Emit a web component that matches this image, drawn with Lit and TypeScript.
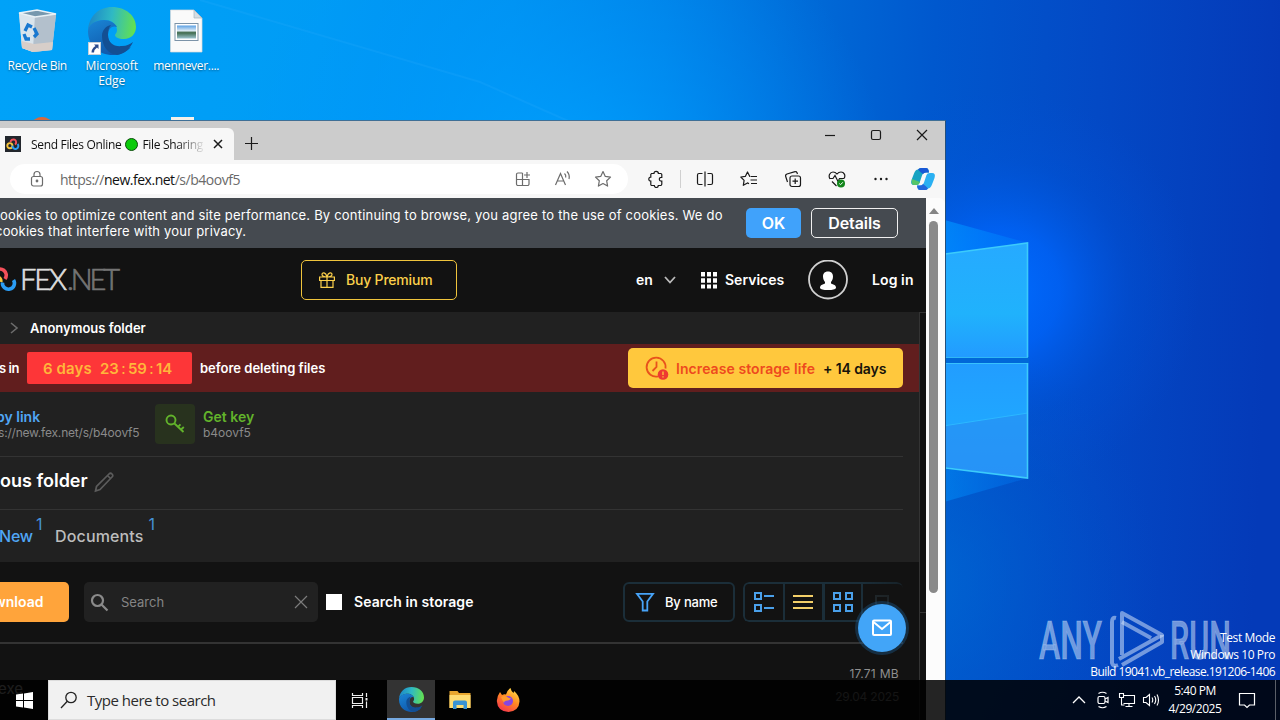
import { LitElement, html, css, svg } from "lit";
import { customElement } from "lit/decorators.js";

const edgeLogo = html`
  <svg viewBox="0 0 48 48" width="100%" height="100%">
    <defs>
      <linearGradient id="sweep" x1="0" y1="0.2" x2="1" y2="0.3">
        <stop offset="0" stop-color="#1b84c8" />
        <stop offset="0.5" stop-color="#2fb9c4" />
        <stop offset="1" stop-color="#62e052" />
      </linearGradient>
      <linearGradient id="body" x1="0" y1="0" x2="0.6" y2="1">
        <stop offset="0" stop-color="#1a86d6" />
        <stop offset="1" stop-color="#0f55a8" />
      </linearGradient>
    </defs>
    <path fill="url(#sweep)" d="M0 23C1 9 11 0 24 0c14 0 24 9 24 20 0 7-5 12-12 12-6 0-9-2-9-4 0-1 2-2 2-5 0-5-5-10-12-10C8 13 1 18 0 23z" />
    <path fill="url(#body)" d="M0 24c0-6 7-11 16-11 6 0 11 3 13 7-4-2-9 1-9 8 0 8 7 14 15 14 4 0 6-1 8-2-4 5-11 8-18 8C10 48 0 38 0 24z" />
    <path fill="#134f93" d="M14 29c0-6 4-10 9-11-2 2-3 5-3 10 0 8 6 12 14 11 5 0 8-2 11-4-3 7-9 12-16 13-9-1-15-9-15-19z" />
  </svg>
`;

const fexMark = svg`
  <g fill="none" stroke-width="3.400">
    <circle cx="8.500" cy="17" r="4.500" stroke="#f5c33b" />
    <path d="M9.500 11a5 5 0 1 1 8 4" stroke="#f4505a" />
    <path d="M13 17a5.200 5.200 0 1 0 9-3" stroke="#2b9df4" />
  </g>
`;

@customElement("desk-wallpaper")
export class DeskWallpaper extends LitElement {
  static styles = css`
    :host,
    svg {
      display: block;
    }

    .mark {
      font-family: "Roboto", sans-serif;
      font-size: 53px;
      font-weight: 500;
      stroke: #cfe0f8;
      stroke-opacity: 0.3;
      stroke-width: 1px;
    }
  `;

  render() {
    return html`
      <svg width="1280" height="720" viewBox="0 0 1280 720">
        <defs>
          <linearGradient id="sky" x1="0" y1="0" x2="1280" y2="60" gradientUnits="userSpaceOnUse">
            <stop offset="0" stop-color="#00a2f8" />
            <stop offset="0.25" stop-color="#009cf5" />
            <stop offset="0.4" stop-color="#0092ee" />
            <stop offset="0.52" stop-color="#0080e4" />
            <stop offset="0.62" stop-color="#006cd8" />
            <stop offset="0.73" stop-color="#0058ce" />
            <stop offset="0.86" stop-color="#0349c5" />
            <stop offset="1" stop-color="#043ab8" />
          </linearGradient>
          <radialGradient id="haze" cx="560" cy="200" r="330" gradientUnits="userSpaceOnUse">
            <stop offset="0" stop-color="#00a4ff" stop-opacity="0.9" />
            <stop offset="1" stop-color="#0090ff" stop-opacity="0" />
          </radialGradient>
          <radialGradient id="glow" cx="1000" cy="290" r="200" gradientUnits="userSpaceOnUse">
            <stop offset="0" stop-color="#006cff" />
            <stop offset="0.3" stop-color="#0064fa" stop-opacity="0.8" />
            <stop offset="0.65" stop-color="#0056e0" stop-opacity="0.3" />
            <stop offset="1" stop-color="#0050d8" stop-opacity="0" />
          </radialGradient>
          <radialGradient id="floor" cx="900" cy="580" r="260" gradientUnits="userSpaceOnUse">
            <stop offset="0" stop-color="#006ad4" stop-opacity="0.9" />
            <stop offset="1" stop-color="#0050c8" stop-opacity="0" />
          </radialGradient>
          <linearGradient id="wedge" x1="930" y1="0" x2="1028" y2="0" gradientUnits="userSpaceOnUse">
            <stop offset="0" stop-color="#0098ff" stop-opacity="0.75" />
            <stop offset="1" stop-color="#0080ff" stop-opacity="0.35" />
          </linearGradient>
          <linearGradient id="pane" x1="0" y1="243" x2="0" y2="478" gradientUnits="userSpaceOnUse">
            <stop offset="0" stop-color="#26aaff" />
            <stop offset="0.3" stop-color="#20b2fc" />
            <stop offset="0.48" stop-color="#229cff" />
            <stop offset="0.75" stop-color="#20a6ff" />
            <stop offset="1" stop-color="#249eff" />
          </linearGradient>
        </defs>
        <rect width="1280" height="720" fill="url(#sky)" />
        <rect width="1280" height="720" fill="url(#haze)" />
        <rect width="1280" height="720" fill="url(#glow)" />
        <rect width="1280" height="720" fill="url(#floor)" />
        <path d="M200 0L480 82L575 124" fill="none" stroke="#3ab4ff" stroke-width="2" opacity="0.15" />
        <path d="M930 216L1028 243V357H930z" fill="url(#wedge)" />
        <path d="M930 506L1028 478V363H930z" fill="url(#wedge)" opacity="0.7" />
        <rect x="930" y="356" width="99" height="8" fill="#0068d8" />
        <g fill="url(#pane)">
          <path d="M930 256L1028 243V357H930z" />
          <path d="M930 363H1028V478L930 465z" />
        </g>
        <path d="M930 428L1028 413V478L930 465z" fill="#2a88f0" opacity="0.5" />
        <path d="M930 428L1028 413" stroke="#2cb8ff" />
        <g fill="none" stroke="#3ccbfb" stroke-width="1.600">
          <path d="M930 256L1027.500 243V357" />
          <path d="M930 466L1027.500 478V363" />
          <path d="M930 357.500H1028M930 363.500H1028" stroke-width="0.800" />
        </g>
        <g fill="#cfe0f8" fill-opacity="0.55">
          <text class="mark" x="1039" y="659" textLength="63" lengthAdjust="spacingAndGlyphs">ANY</text>
          <text class="mark" x="1170" y="659" textLength="61" lengthAdjust="spacingAndGlyphs">RUN</text>
        </g>
        <g fill="none" stroke="#cfe0f8" stroke-opacity="0.55" stroke-width="4" stroke-linejoin="round">
          <path d="M1122 655V613L1162 635L1119 659" />
          <path d="M1116 618Q1112 617 1112 622V663Q1113 667 1118 665" />
          <path d="M1122 665L1162 642V635M1122 622L1151 638" />
        </g>
      </svg>
    `;
  }
}

@customElement("desk-icons")
export class DeskIcons extends LitElement {
  static styles = css`
    :host {
      display: block;
      font-family: "Open Sans", "Noto Sans", sans-serif;
    }

    .row {
      display: flex;
      padding-top: 7px;
    }

    .item {
      display: flex;
      flex-direction: column;
      align-items: center;
      width: 74.5px;
      color: #fff;
      font-size: 12px;
      line-height: 15px;
      letter-spacing: -0.3px;
      text-align: center;
      text-shadow: 0 1px 2px rgba(0, 0, 0, 0.45);
    }

    .icon {
      display: flex;
      align-items: flex-end;
      width: 48px;
      height: 48px;
      margin-bottom: 3px;
    }

    .shortcut {
      flex-shrink: 0;
      width: 13px;
      height: 13px;
      margin: 0 -13px 0 0;
      z-index: 1;
    }

    .peek {
      display: flex;
      padding: 29px 0 0 32px;
      gap: 119px;
    }

    .fox {
      width: 20px;
      height: 16px;
      border-radius: 50% 50% 0 0;
      background: #d8693c;
    }

    .sheet {
      width: 23px;
      height: 16px;
      background: #f4f1ea;
    }

    .wide {
      letter-spacing: -0.05px;
    }
  `;

  render() {
    return html`
      <div class="row">
        <div class="item">
          <svg class="icon" viewBox="0 0 48 48">
            <path d="M6 6L24 3 43 7 39 43 20 45 9 41z" fill="#c2d2de" />
            <path d="M6 6L22 9 20 45 9 41z" fill="#d9e4ec" />
            <path d="M22 9L43 7 39 43 20 45z" fill="#b3c0cc" />
            <path d="M6 6L24 3 43 7 22 10z" fill="#7798ae" stroke="#e9f1f6" stroke-width="1.500" />
            <path d="M8.500 34L9 41 20 45 39 43 40 35 21 37z" fill="#d7cec9" />
            <g fill="none" stroke="#1878d0" stroke-width="3.300">
              <path d="M12 24l3-6 4 2" />
              <path d="M21 21l3 6-3 3" />
              <path d="M17 32h-4l-2-5" />
            </g>
          </svg>
          <span>Recycle Bin</span>
        </div>
        <div class="item">
          <div class="icon">
            <svg class="shortcut" viewBox="0 0 13 13">
              <rect x="0.500" y="0.500" width="12" height="12" fill="#fff" stroke="#c8d0d8" />
              <path d="M6 2.500h4.500V7L9 5.500Q6 7.500 6 10.500H3.500Q3.500 6.500 7.500 4z" fill="#2b4a8c" />
            </svg>
            ${edgeLogo}
          </div>
          <span class="wide">Microsoft<br />Edge</span>
        </div>
        <div class="item">
          <svg class="icon" viewBox="0 0 48 48">
            <defs>
              <linearGradient id="photo" x1="0" y1="0" x2="0" y2="1">
                <stop offset="0" stop-color="#5aa0e4" />
                <stop offset="0.400" stop-color="#dbe9f4" />
                <stop offset="0.550" stop-color="#3f6a4c" />
                <stop offset="1" stop-color="#9cc3cf" />
              </linearGradient>
            </defs>
            <path d="M8.500 3H32L40 11V45H8.500z" fill="#fafafa" stroke="#d8d8d8" stroke-width="0.700" />
            <path d="M32 3V11H40z" fill="#d5dde3" stroke="#a8b4bd" stroke-width="0.700" />
            <rect x="13" y="16.500" width="23" height="17" fill="#fff" stroke="#7c93a8" />
            <rect x="15" y="18.500" width="19" height="13" fill="url(#photo)" />
          </svg>
          <span>mennever....</span>
        </div>
      </div>
      <div class="peek">
        <div class="fox"></div>
        <div class="sheet"></div>
      </div>
    `;
  }
}

@customElement("edge-chrome")
export class EdgeChrome extends LitElement {
  static styles = css`
    :host {
      display: block;
      font-family: "Open Sans", "Noto Sans", sans-serif;
      color: #111;
    }

    .titlebar {
      display: flex;
      height: 39px;
      background: #cccccc;
    }

    .tab {
      display: flex;
      align-items: center;
      box-sizing: border-box;
      width: 234px;
      margin-top: 7px;
      padding-left: 5px;
      border-radius: 0 6px 0 0;
      background: #f7f7f7;
      font-size: 12px;
    }

    .favicon {
      width: 16px;
      height: 16px;
      margin-right: 10px;
    }

    .caption {
      display: flex;
      align-items: center;
      width: 174px;
      overflow: hidden;
      white-space: nowrap;
      letter-spacing: -0.32px;
      -webkit-mask-image: linear-gradient(to right, #000 145px, transparent 175px);
    }

    .caption span {
      flex-shrink: 0;
    }

    .dot {
      box-sizing: border-box;
      width: 13px;
      height: 13px;
      margin: 0 4px 0 4px;
      border: 1px solid #0a4a0a;
      border-radius: 50%;
      background: #0acb0a;
    }

    .close {
      margin-left: 7px;
    }

    .plus {
      margin: 15px 0 0 10px;
    }

    .controls {
      display: flex;
      margin-left: auto;
      height: 29px;
    }

    .controls svg {
      width: 46px;
      height: 29px;
    }

    svg {
      display: block;
      flex-shrink: 0;
      fill: none;
      stroke: #1a1a1a;
      stroke-width: 1.2;
    }

    .toolbar {
      display: flex;
      align-items: center;
      height: 38px;
      background: #f7f7f7;
    }

    .address {
      display: flex;
      align-items: center;
      box-sizing: border-box;
      width: 618px;
      height: 30px;
      margin-left: 10px;
      padding-left: 17px;
      border-radius: 15px;
      background: #fff;
    }

    .address svg {
      stroke: #6c6c6c;
    }

    .url {
      width: 443px;
      margin-left: 13px;
      font-size: 14px;
      letter-spacing: -0.48px;
      color: #6a6a6a;
      white-space: nowrap;
    }

    .url b {
      font-weight: 400;
      color: #111;
    }

    .tool {
      display: flex;
      justify-content: center;
      width: 44px;
    }

    .address .tool {
      width: 40px;
    }

    .puzzle {
      margin-left: 6px;
    }

    .divider {
      width: 1px;
      height: 18px;
      margin: 0 2px 0 2px;
      background: #d0d0d0;
    }

    .pilot {
      width: 40px;
    }
  `;

  render() {
    return html`
      <div class="titlebar">
        <div class="tab">
          <svg class="favicon" viewBox="0 0 28 28">
            <rect width="28" height="28" fill="#22262c" stroke="none" />
            ${fexMark}
          </svg>
          <div class="caption">
            <span>Send Files Online</span>
            <span class="dot"></span>
            <span>File Sharing</span>
          </div>
          <svg class="close" width="12" height="12" viewBox="0 0 12 12"><path d="M2 2l8 8M10 2l-8 8" stroke-width="1.500" /></svg>
        </div>
        <svg class="plus" width="15" height="15" viewBox="0 0 15 15"><path d="M7.500 1v13M1 7.500h13" /></svg>
        <div class="controls">
          <svg viewBox="0 0 46 29"><path d="M18 14.500h10" /></svg>
          <svg viewBox="0 0 46 29"><rect x="18.500" y="9.500" width="9" height="9" rx="1.500" /></svg>
          <svg viewBox="0 0 46 29"><path d="M18 9l10 10M28 9l-10 10" /></svg>
        </div>
      </div>
      <div class="toolbar">
        <div class="address">
          <svg width="20" height="20" viewBox="0 0 20 20">
            <rect x="4.500" y="7.500" width="11" height="9.500" rx="2" />
            <path d="M7 7.500V5.500a3 3 0 0 1 6 0v2" />
            <circle cx="10" cy="12" r="0.800" fill="#6c6c6c" />
          </svg>
          <div class="url">https://<b>new.fex.net</b>/s/b4oovf5</div>
          <div class="tool">
            <svg width="18" height="18" viewBox="0 0 18 18">
              <path d="M8.500 3H4a1.500 1.500 0 0 0-1.500 1.500V14A1.500 1.500 0 0 0 4 15.500h9.500A1.500 1.500 0 0 0 15 14V9.500H2.500M8.500 3v12.500M13 2v6M10 5h6" />
            </svg>
          </div>
          <div class="tool">
            <svg width="18" height="18" viewBox="0 0 18 18">
              <path d="M1.500 15L6.500 3.500 11.500 15M3.300 11h6.400M10.500 3.500q1.700 1.500 1.200 4M13 1.500q3 3 2 7.500" />
            </svg>
          </div>
          <div class="tool">
            <svg width="18" height="18" viewBox="0 0 18 18">
              <path d="M9 1.500l2.300 4.900 5.200.7-3.800 3.700.9 5.300L9 13.500l-4.600 2.600.9-5.300L1.500 7.100l5.200-.7z" stroke-linejoin="round" />
            </svg>
          </div>
        </div>
        <div class="tool puzzle">
          <svg width="18" height="18" viewBox="0 0 18 18">
            <path d="M4.500 3.500H7a2.200 2.200 0 0 1 4.400 0h2.400a1 1 0 0 1 1 1v2.800h-.6a1.900 1.900 0 0 0 0 3.800h.6V14a1.500 1.500 0 0 1-1.500 1.500h-2a2 2 0 0 1-4 0H5A1.200 1.200 0 0 1 3.800 14v-2.800a2 2 0 0 1 0-4V4.500z" />
          </svg>
        </div>
        <span class="divider"></span>
        <div class="tool">
          <svg width="18" height="18" viewBox="0 0 18 18">
            <path d="M6.500 3.500H3A1.500 1.500 0 0 0 1.500 5v8A1.500 1.500 0 0 0 3 14.500h3.500M11.500 3.500H15A1.500 1.500 0 0 1 16.500 5v8a1.500 1.500 0 0 1-1.500 1.500h-3.500M9 1.500v15" />
          </svg>
        </div>
        <div class="tool">
          <svg width="18" height="18" viewBox="0 0 18 18">
            <path d="M10.500 6.500H9.800L7.500 2 5.300 6.400.8 7l3.300 3.300-.8 5 4.200-2.400 1.500.8M11 6.500h6M10.500 10h6.500M11 13.500h6" stroke-linejoin="round" />
          </svg>
        </div>
        <div class="tool">
          <svg width="18" height="18" viewBox="0 0 18 18">
            <rect x="6" y="6" width="10.500" height="10.500" rx="2" />
            <path d="M11.200 8.500v5.500M8.500 11.200H14M13.500 4l-.6-1.400A1.500 1.500 0 0 0 11 1.700L3 4a2 2 0 0 0-1.300 2.500L3.500 12" />
          </svg>
        </div>
        <div class="tool">
          <svg width="18" height="18" viewBox="0 0 18 18">
            <path d="M2 9C0 5.500 2 2 5 2c2 0 3.200 1 4 2 .8-1 2-2 4-2 3 0 5 3.500 3 6.500M4 11.500l4.500 4.500M1.500 8.500H5L7 5.500l3 6 1.500-3H16" />
            <circle cx="13" cy="13.500" r="4" fill="#12851b" stroke="none" />
            <path d="M11.300 13.500l1.300 1.200 2.200-2.400" stroke="#fff" stroke-width="1" />
          </svg>
        </div>
        <div class="tool">
          <svg width="18" height="18" viewBox="0 0 18 18">
            <g fill="#1a1a1a" stroke="none"><circle cx="3.500" cy="9" r="1.200" /><circle cx="9" cy="9" r="1.200" /><circle cx="14.500" cy="9" r="1.200" /></g>
          </svg>
        </div>
        <div class="tool pilot">
          <svg width="26" height="24" viewBox="0 0 26 24">
            <g stroke="none">
              <path d="M8 2.500Q9 1 11 1h5q2 0 2.500 2L19 5.500h-3q-3 0-4 3L9.500 16Q9 18 6 18H4Q0 18 1.500 13L4 6.500Q5.500 2.500 8 2.500z" fill="#16a3c2" />
              <path d="M8 2.500Q9 1 11 1h5q2 0 2.500 2L19 5.500h-3q-2 0-3 1.500Q10 5 8 2.500z" fill="#1958d6" />
              <path d="M2 12l8 3-.5 1Q9 18 6 18H4q-3 0-2-6z" fill="#54c569" />
              <path d="M18 21.500Q17 23 15 23h-5q-2 0-2.500-2L7 18.500h3q3 0 4-3L16.500 8q.5-2 3.500-2h2q4 0 2.500 5L22 17.500q-1.500 4-4 4z" fill="#2ab0f2" />
              <path d="M18 21.500Q17 23 15 23h-5q-2 0-2.500-2L7 18.500h3q2 0 3-1.500 3 2 5 4.500z" fill="#2167dc" />
            </g>
          </svg>
        </div>
      </div>
    `;
  }
}

@customElement("fex-page")
export class FexPage extends LitElement {
  static styles = css`
    :host {
      display: block;
      width: 926px;
      height: 522px;
      overflow: hidden;
      font-family: "Inter", sans-serif;
      background: #121212;
      color: #fff;
      white-space: nowrap;
    }

    svg {
      display: block;
      flex-shrink: 0;
      fill: none;
    }

    .cookies {
      display: flex;
      box-sizing: border-box;
      height: 50px;
      padding-top: 10px;
      background: #454a50;
    }

    .notice {
      width: 746px;
      margin-top: -1px;
      font-size: 13px;
      line-height: 16px;
      letter-spacing: 0.2px;
    }

    .notice span {
      margin-left: -5px;
    }

    .btn {
      display: flex;
      align-items: center;
      justify-content: center;
      box-sizing: border-box;
      width: 55px;
      height: 30px;
      border-radius: 5px;
      background: #40a2fb;
      font-size: 16px;
      font-weight: 600;
      letter-spacing: -0.1px;
    }

    .outline {
      width: 87px;
      margin-left: 10px;
      border: 1px solid #f0f0f0;
      background: none;
    }

    .header {
      display: flex;
      align-items: center;
      height: 64px;
    }

    .header span {
      margin-top: -1px;
    }

    .logo {
      width: 301px;
    }

    .brand {
      font-family: "Lato", sans-serif;
      font-size: 29px;
      font-weight: 300;
      stroke-width: 0.7;
    }

    .premium {
      display: flex;
      align-items: center;
      box-sizing: border-box;
      width: 156px;
      height: 40px;
      padding-left: 17px;
      gap: 11px;
      border: 1px solid #f0c43c;
      border-radius: 5px;
      color: #fcd04b;
      font-size: 14px;
      font-weight: 500;
      letter-spacing: -0.2px;
    }

    .lang {
      display: flex;
      align-items: center;
      width: 64px;
      margin-left: 179px;
      gap: 10px;
      font-size: 14px;
      font-weight: 600;
    }

    .services {
      display: flex;
      align-items: center;
      width: 108px;
      gap: 8px;
      font-size: 14px;
      font-weight: 600;
    }

    .login {
      margin-left: 24px;
      font-size: 14px;
      font-weight: 600;
      letter-spacing: 0.1px;
    }

    .body {
      display: grid;
      grid-template-columns: 919px 1fr;
    }

    .side {
      display: flex;
      flex-direction: column;
      border-left: 1px solid #333;
    }

    .side-box {
      box-sizing: border-box;
      height: 300px;
      border-top: 1px solid #333;
    }

    .crumbs {
      display: flex;
      align-items: center;
      height: 32px;
      padding-left: 9px;
      gap: 11px;
      background: #212121;
      font-size: 13px;
      font-weight: 600;
    }

    .crumbs span {
      margin-top: -1px;
    }

    .expiry {
      display: flex;
      align-items: center;
      height: 48px;
      background: #611e1e;
      font-size: 13px;
      font-weight: 600;
    }

    .clip {
      width: 28px;
      margin-left: -1px;
      letter-spacing: -0.4px;
    }

    .timer {
      display: flex;
      align-items: center;
      box-sizing: border-box;
      width: 165px;
      height: 32px;
      margin-right: 8px;
      padding-left: 16px;
      border-radius: 2px;
      background: #fd3638;
      color: #ffb63b;
      font-size: 15px;
    }

    .timer i {
      width: 9px;
      font-style: normal;
      text-align: center;
      font-weight: 400;
    }

    .timer .days {
      width: 57px;
      letter-spacing: 0.1px;
    }

    .extend {
      display: flex;
      align-items: center;
      box-sizing: border-box;
      width: 275px;
      height: 40px;
      margin: 0 16px 0 auto;
      padding-left: 17px;
      border-radius: 5px;
      background: #ffc83d;
      color: #ee4a1e;
      font-size: 14px;
      letter-spacing: -0.1px;
    }

    .extend .label {
      width: 147px;
      margin-left: 7px;
      letter-spacing: 0.07px;
    }

    .extend .bonus {
      color: #17130a;
    }

    .panel {
      padding-right: 16px;
      background: #212121;
    }

    .share {
      display: flex;
      box-sizing: border-box;
      height: 65px;
      padding-top: 12px;
      border-bottom: 1px solid #333;
    }

    .pair {
      padding-top: 4px;
      font-size: 14px;
      font-weight: 600;
      line-height: 17px;
    }

    .pair small {
      display: block;
      color: #8a8a8a;
      font-size: 12px;
      font-weight: 400;
      line-height: 15px;
    }

    .link {
      width: 155px;
      color: #50a6f5;
    }

    .link div {
      margin-left: -4px;
    }

    .link small {
      margin-left: -2px;
      letter-spacing: -0.2px;
    }

    .key {
      display: flex;
      align-items: center;
      justify-content: center;
      width: 40px;
      height: 40px;
      margin-right: 8px;
      border-radius: 4px;
      background: #28321e;
    }

    .green {
      color: #62b32b;
    }

    .name {
      display: flex;
      align-items: center;
      box-sizing: border-box;
      height: 53px;
      gap: 6px;
      padding-bottom: 4px;
      border-bottom: 1px solid #333;
      font-size: 18px;
      font-weight: 600;
    }

    .name span {
      margin-top: -2px;
    }

    .name svg {
      margin-top: 2px;
    }

    .filters {
      display: flex;
      box-sizing: border-box;
      height: 52px;
      padding-top: 16px;
      color: #bdbdbd;
      font-size: 16px;
      font-weight: 500;
      line-height: 20px;
      letter-spacing: 0.15px;
    }

    .filters sup {
      width: 8px;
      margin: -12px 11px 0 5px;
      color: #4591d6;
      font-size: 16px;
      font-weight: 400;
      vertical-align: baseline;
    }

    .filters .on {
      width: 32px;
      margin-left: -1px;
      color: #50a6f5;
      letter-spacing: -0.2px;
    }

    .actions {
      display: flex;
      align-items: center;
      box-sizing: border-box;
      height: 82px;
      margin-right: 16px;
      border-bottom: 2px solid #333;
    }

    .download {
      box-sizing: border-box;
      width: 69px;
      height: 40px;
      border-radius: 0 5px 5px 0;
      background: #ffa43b;
      font-size: 14px;
      font-weight: 600;
      line-height: 40px;
    }

    .download span {
      margin-left: -6px;
    }

    .search {
      display: flex;
      align-items: center;
      box-sizing: border-box;
      width: 234px;
      height: 40px;
      margin: 0 8px 0 15px;
      padding: 0 8px 0 6px;
      border-radius: 5px;
      background: #212121;
      color: #858585;
      font-size: 13px;
    }

    .search span {
      flex: 1;
      margin-left: 12px;
    }

    .check {
      width: 16px;
      height: 16px;
      margin-right: 12px;
      background: #fff;
    }

    .storage {
      width: 269px;
      margin-top: -2px;
      font-size: 14px;
      font-weight: 600;
      letter-spacing: 0.07px;
    }

    .sort {
      display: flex;
      align-items: center;
      box-sizing: border-box;
      width: 112px;
      height: 40px;
      margin-right: 8px;
      padding-left: 10px;
      gap: 10px;
      border: 2px solid #1b2e39;
      border-radius: 6px;
      font-size: 13px;
      font-weight: 500;
      letter-spacing: -0.2px;
    }

    .views {
      display: flex;
      box-sizing: border-box;
      width: 160px;
      height: 40px;
      border: 2px solid #1b2e39;
      border-right: 0;
      border-radius: 6px;
      -webkit-mask-image: linear-gradient(to right, #000 120px, rgba(0, 0, 0, 0.6) 158px);
    }

    .view {
      display: flex;
      align-items: center;
      justify-content: center;
      box-sizing: border-box;
      flex-shrink: 0;
      width: 40px;
      border-right: 2px solid #1b2e39;
    }

    .view.thick {
      padding-right: 1px;
      border-right-width: 3px;
    }

    .view.tiles {
      width: 38px;
    }

    .view:last-child {
      border-right: 0;
      width: 38px;
      opacity: 0.3;
    }

    .file {
      display: flex;
      flex-direction: column;
      align-items: flex-end;
      padding: 22px 20px 0 0;
      color: #8f8f8f;
      font-size: 12px;
      line-height: 16px;
    }

    .size {
      letter-spacing: 0.3px;
    }

    .date {
      margin-top: 7px;
      letter-spacing: -0.2px;
    }

    .ext {
      align-self: flex-start;
      margin: -24px 0 0 -2px;
      color: #ccc;
      font-size: 15px;
    }
  `;

  render() {
    return html`
      <div class="cookies">
        <div class="notice">
          ookies to optimize content and site performance. By continuing to browse, you agree to the use of cookies. We do<br />
          <span>cookies that interfere with your privacy.</span>
        </div>
        <div class="btn">OK</div>
        <div class="btn outline">Details</div>
      </div>
      <div class="header">
        <svg class="logo" width="301" height="40" viewBox="0 0 301 40">
          <g fill="none" stroke-width="3.600">
            <path d="M-5 11.500A6 6 0 1 1 5 19" stroke="#f4505a" />
            <path d="M-3 17A4 4 0 0 1 1 22" stroke="#f5c33b" stroke-width="3" />
            <path d="M2.500 22.500A6 6 0 1 0 13.500 20" stroke="#2b9df4" />
          </g>
          <text class="brand" x="20" y="30" textLength="47" fill="#dcdcdc" stroke="#dcdcdc">FEX</text>
          <text class="brand" x="67" y="30" textLength="53" fill="#747474" stroke="#747474">.NET</text>
        </svg>
        <div class="premium">
          <svg width="16" height="16" viewBox="0 0 16 16" stroke="#fcd04b" stroke-width="1.200">
            <path d="M.6 5h14.800v3.500H.6zM2 8.500h12v6.900H2zM8 5v10.400M8 5C4 5 3 4 3 2.600 3 .4 6.500-.4 8 5c1.500-5.400 5-4.600 5-2.400C13 4 12 5 8 5z" />
          </svg>
          <span>Buy Premium</span>
        </div>
        <div class="lang">
          <span>en</span>
          <svg width="14" height="10" viewBox="0 0 14 10" stroke="#bbb" stroke-width="1.800"><path d="M2 2l5 5.500L12 2" /></svg>
        </div>
        <div class="services">
          <svg width="17" height="17" viewBox="0 0 17 17">
            <path fill="#fff" d="M1 0h4v4.500H1zM7 0h4v4.500H7zM13 0h4v4.500h-4zM1 6.200h4v4.500H1zM7 6.200h4v4.500H7zM13 6.200h4v4.500h-4zM1 12.400h4v4.200H1zM7 12.400h4v4.200H7zM13 12.400h4v4.200h-4z" />
          </svg>
          <span>Services</span>
        </div>
        <svg width="40" height="40" viewBox="0 0 40 40">
          <circle cx="20" cy="19.500" r="19" stroke="#d0d0d0" stroke-width="1.800" />
          <path fill="#fff" d="M20 11.500c3.500 0 5 2.300 5 5 0 2.500-1 4.500-2 5.500v1.500l3.500 1.500c1 .5 1.500 1.500 1.500 3-1 1.500-3 2-8 2s-7-.5-8-2c0-1.500.5-2.500 1.500-3l3.500-1.500v-1.500c-1-1-2-3-2-5.500 0-2.700 1.500-5 5-5z" />
        </svg>
        <span class="login">Log in</span>
      </div>
      <div class="body">
        <div>
          <div class="crumbs">
            <svg width="10" height="14" viewBox="0 0 10 14" stroke="#6c6c6c" stroke-width="1.600"><path d="M2 2l6 5-6 5" /></svg>
            <span>Anonymous folder</span>
          </div>
          <div class="expiry">
            <span class="clip">s in</span>
            <div class="timer"><span class="days">6 days</span>23<i>:</i>59<i>:</i>14</div>
            <span>before deleting files</span>
            <div class="extend">
              <svg width="24" height="24" viewBox="0 0 24 24" stroke="#e8521c" stroke-width="1.800">
                <path d="M20.500 12.500A9.500 9.500 0 1 0 13 20.400M11.500 5.500V11L7.500 15" />
                <circle cx="18" cy="18.500" r="5.300" fill="#ee3a32" stroke="none" />
                <path d="M18 15.500v3.500M18 20.200v1.300" stroke="#ffc83d" stroke-width="1.300" />
              </svg>
              <span class="label">Increase storage life</span>
              <span class="bonus">+ 14 days</span>
            </div>
          </div>
          <div class="panel">
            <div class="share">
              <div class="pair link"><div>py link</div><small>s://new.fex.net/s/b4oovf5</small></div>
              <div class="key">
                <svg width="20" height="20" viewBox="0 0 20 20" stroke="#62b32b" stroke-width="1.900">
                  <circle cx="6" cy="6" r="4.500" />
                  <path d="M9.200 9.200L18.500 18M13 12.800l2.500-2.500M16 15.500l2.800-2.500" />
                </svg>
              </div>
              <div class="pair green"><div>Get key</div><small>b4oovf5</small></div>
            </div>
            <div class="name">
              <span>ous folder</span>
              <svg width="22" height="22" viewBox="0 0 22 22" stroke="#5c5c5c" stroke-width="1.700">
                <path d="M1.500 20l1-4.500L15 3q1.500-1.500 3 0t0 3L6 18.500zM13.500 4.500l3 3" />
              </svg>
            </div>
            <div class="filters">
              <span class="on">New</span><sup>1</sup>
              <span>Documents</span><sup>1</sup>
            </div>
          </div>
          <div class="actions">
            <div class="download"><span>wnload</span></div>
            <div class="search">
              <svg width="19" height="19" viewBox="0 0 19 19" stroke="#8a8a8a" stroke-width="2.200">
                <circle cx="7.500" cy="7.500" r="5.500" /><path d="M11.500 11.500l6 6" />
              </svg>
              <span>Search</span>
              <svg width="18" height="18" viewBox="0 0 18 18" stroke="#7c7c7c" stroke-width="1.200"><path d="M3 3l12 12M15 3L3 15" /></svg>
            </div>
            <div class="check"></div>
            <div class="storage">Search in storage</div>
            <div class="sort">
              <svg width="20" height="20" viewBox="0 0 20 20" stroke="#47a3f7" stroke-width="1.800"><path d="M2 1.800H18L12.300 9.500V18.500H7.700V9.500z" /></svg>
              By name
            </div>
            <div class="views">
              <div class="view">
                <svg width="22" height="22" viewBox="0 0 22 22" stroke="#4aa0ea" stroke-width="2">
                  <path d="M2 2h6v6H2zM2 14h6v6H2zM11 5h10M11 17h10" />
                </svg>
              </div>
              <div class="view thick">
                <svg width="20" height="20" viewBox="0 0 20 20" stroke="#f3cf68" stroke-width="2"><path d="M0 4h20M0 10h20M0 16h20" /></svg>
              </div>
              <div class="view tiles">
                <svg width="22" height="22" viewBox="0 0 22 22" stroke="#4aa0ea" stroke-width="2">
                  <path d="M2 2h6v6H2zM14 2h6v6H14zM2 14h6v6H2zM14 14h6v6H14z" />
                </svg>
              </div>
              <div class="view">
                <svg width="16" height="16" viewBox="0 0 16 16" stroke="#47606e" stroke-width="2"><path d="M2 2h12v12H2z" /></svg>
              </div>
            </div>
          </div>
          <div class="file">
            <span class="size">17.71 MB</span>
            <span class="date">29.04 2025</span>
            <span class="ext">exe</span>
          </div>
        </div>
        <div class="side">
          <div class="side-box"></div>
          <div class="side-box"></div>
        </div>
      </div>
    `;
  }
}

@customElement("task-bar")
export class TaskBar extends LitElement {
  static styles = css`
    :host {
      display: flex;
      height: 40px;
      background: rgba(0, 0, 0, 0.86);
      color: #fff;
      font-family: "Open Sans", "Noto Sans", sans-serif;
      white-space: nowrap;
    }

    svg {
      display: block;
      fill: none;
    }

    .cell {
      display: flex;
      align-items: center;
      justify-content: center;
      box-sizing: border-box;
      width: 48px;
    }

    .search {
      display: flex;
      align-items: center;
      box-sizing: border-box;
      width: 288px;
      padding-left: 11px;
      gap: 9px;
      border: 1px solid #dcdcdc;
      background: #f1f1f1;
      color: #2b2b2b;
      font-size: 15px;
      letter-spacing: -0.5px;
    }

    .edge {
      margin: 0 1px 0 3px;
      border-bottom: 2px solid #76a9e0;
      background: #333;
    }

    .edge div {
      width: 25px;
      height: 25px;
    }

    .tray {
      display: flex;
      align-items: center;
      margin-left: auto;
    }

    .tray .cell {
      width: 24px;
    }

    .clock {
      width: 64px;
      font-size: 12px;
      line-height: 18px;
      text-align: center;
      letter-spacing: -0.45px;
    }

    .tray .note {
      width: 40px;
    }

    .show {
      width: 4px;
      height: 40px;
      margin-left: 8px;
      border-left: 1px solid #5a5f68;
    }
  `;

  render() {
    return html`
      <div class="cell">
        <svg width="17" height="17" viewBox="0 0 17 17">
          <path fill="#fff" d="M0 2.500L7 1.500V8H0zM8 1.400L17 0V8H8zM0 9H7V15.500L0 14.500zM8 9H17V17L8 15.600z" />
        </svg>
      </div>
      <div class="search">
        <svg width="18" height="18" viewBox="0 0 18 18" stroke="#222" stroke-width="1.300"><circle cx="11" cy="6.500" r="5.200" /><path d="M7.300 10.300L1 17" /></svg>
        Type here to search
      </div>
      <div class="cell">
        <svg width="18" height="17" viewBox="0 0 18 17" stroke="#eee" stroke-width="1.200">
          <path d="M1.500 1v2.500h10V1M1.500 16v-2.500h10V16M1.500 5.500h10v6h-10zM15.500 1v4M15.500 9.500V16" /><path d="M14.500 6h2v2.500h-2z" fill="#eee" stroke="none" />
        </svg>
      </div>
      <div class="cell edge"><div>${edgeLogo}</div></div>
      <div class="cell">
        <svg width="22" height="20" viewBox="0 0 22 20">
          <path d="M.5 1h8l1.500 2H21.500V18H.5z" fill="#e9a72f" />
          <path d="M.5 5H21.500V18H.5z" fill="#ffdc72" />
          <path d="M4 19v-6.500Q4 10.500 6 10.500H16Q18 10.500 18 12.500V19H14.500V15H7.500V19z" fill="#3b93d2" />
        </svg>
      </div>
      <div class="cell">
        <svg width="24" height="24" viewBox="0 0 24 24">
          <defs>
            <linearGradient id="fire" x1="0.800" y1="0" x2="0.200" y2="1">
              <stop offset="0" stop-color="#ffe14a" />
              <stop offset="0.450" stop-color="#ff8a22" />
              <stop offset="1" stop-color="#f5304f" />
            </linearGradient>
          </defs>
          <path fill="url(#fire)" d="M4 4l2 3q2-1 4-.5Q11.500 2 14.500 0q.5 3 3 5 .5-1 .5-2 5.500 4.500 5.500 10.500Q23 23 12.500 24 1.500 23.500.8 13 1 8 4 4z" />
          <circle cx="12" cy="13" r="5" fill="#8646e0" />
          <path fill="#ff9a2c" d="M5 9q4-2 7 .5 1.500 1 3 .5-1 2.500-3.500 2.500Q8 12.500 8 15 6 12 5 9z" />
        </svg>
      </div>
      <div class="tray">
        <div class="cell">
          <svg width="14" height="14" viewBox="0 0 14 14" stroke="#fff" stroke-width="1.300"><path d="M1 10l6-6 6 6" /></svg>
        </div>
        <div class="cell">
          <svg width="14" height="18" viewBox="0 0 14 18" stroke="#fff" stroke-width="1.200">
            <rect x="2" y="5.500" width="7" height="7" rx="1.500" /><path d="M9 8l3-1.500v5L9 10M2.500 2.500Q6.500 0 10.500 2.500M2.500 15.500Q6.500 18 10.500 15.500" />
          </svg>
        </div>
        <div class="cell">
          <svg width="18" height="16" viewBox="0 0 18 16" stroke="#fff" stroke-width="1.100">
            <path d="M5.500 3.500h11v8h-11M11 11.500V14.500M7.500 14.500h7M1.500 1.500h4v4h-4zM3.500 5.500V13h3" />
          </svg>
        </div>
        <div class="cell">
          <svg width="18" height="16" viewBox="0 0 18 16" stroke="#fff" stroke-width="1.100">
            <path d="M1.500 5.500H4L7.500 2.500v11L4 10.500H1.500zM10 5.500q1.500 2.500 0 5M12.500 4q2.500 4 0 8M15 2.500q3 5.500 0 11" />
          </svg>
        </div>
        <div class="clock">5:40 PM<br />4/29/2025</div>
        <div class="cell note">
          <svg width="18" height="18" viewBox="0 0 18 18" stroke="#fff" stroke-width="1.200"><path d="M1.500 2.500h15v11.500h-5L9 16.500 6.500 14h-5z" /></svg>
        </div>
        <div class="show"></div>
      </div>
    `;
  }
}

@customElement("app-root")
export class AppRoot extends LitElement {
  static styles = css`
    :host {
      display: block;
      position: relative;
      width: 1280px;
      height: 720px;
      overflow: hidden;
      background: #0060d8;
    }

    desk-wallpaper,
    desk-icons {
      position: absolute;
      inset: 0;
    }

    .build {
      position: absolute;
      right: 5px;
      top: 629px;
      color: #fff;
      font-family: "Open Sans", "Noto Sans", sans-serif;
      font-size: 12px;
      line-height: 17px;
      letter-spacing: -0.4px;
      text-align: right;
    }

    .build span {
      letter-spacing: -0.56px;
    }

    .window {
      position: absolute;
      left: 0;
      top: 120px;
      box-sizing: border-box;
      width: 946px;
      height: 600px;
      overflow: hidden;
      border-top: 1px solid #3f6f96;
      border-right: 1px solid #24507c;
      background: #f7f7f7;
    }

    .view {
      display: flex;
    }

    .scroll {
      display: flex;
      flex-direction: column;
      align-items: center;
      width: 15px;
      padding: 10px 4px 0 0;
      border-radius: 0 6px 0 0;
      background: #fcfcfc;
    }

    .arrow {
      border: 5px solid transparent;
      border-top: 0;
      border-bottom: 6px solid #858585;
    }

    .thumb {
      width: 9px;
      height: 372px;
      margin-top: 7px;
      border-radius: 5px;
      background: #8a8a8a;
    }

    .chat {
      position: absolute;
      left: 858px;
      top: 604px;
      display: flex;
      align-items: center;
      justify-content: center;
      width: 48px;
      height: 48px;
      border-radius: 50%;
      background: #42a5f8;
      box-shadow: 0 0 0 3px rgba(30, 90, 140, 0.4);
    }

    task-bar {
      position: absolute;
      left: 0;
      right: 0;
      bottom: 0;
    }
  `;

  render() {
    return html`
      <desk-wallpaper></desk-wallpaper>
      <desk-icons></desk-icons>
      <div class="build">Test Mode<br />Windows 10 Pro<br /><span>Build 19041.vb_release.191206-1406</span></div>
      <div class="window">
        <edge-chrome></edge-chrome>
        <div class="view">
          <fex-page></fex-page>
          <div class="scroll">
            <div class="arrow"></div>
            <div class="thumb"></div>
          </div>
        </div>
      </div>
      <div class="chat">
        <svg width="24" height="24" viewBox="0 0 24 24" fill="none" stroke="#fff" stroke-width="2">
          <rect x="3" y="4.500" width="18" height="14.500" rx="1" /><path d="M3.500 6l8.500 7 8.500-7" />
        </svg>
      </div>
      <task-bar></task-bar>
    `;
  }
}
